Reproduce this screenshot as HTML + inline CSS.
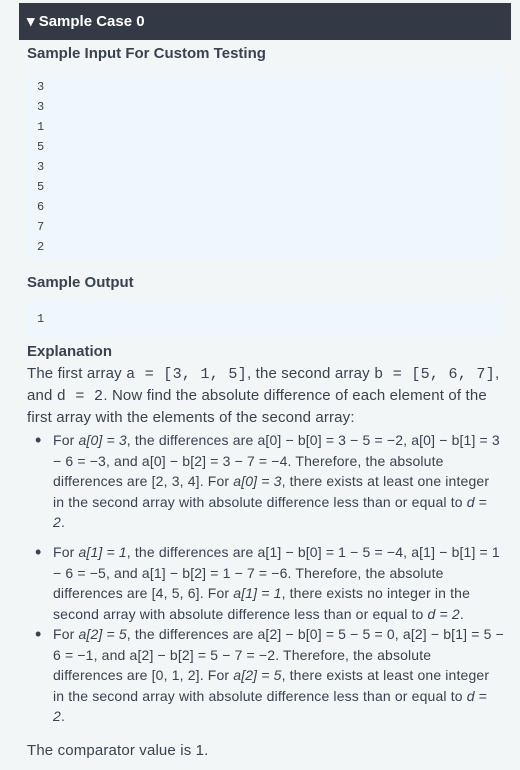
<!DOCTYPE html>
<html><head><meta charset="utf-8"><style>
body{margin:0;width:520px;height:770px;background:#f2f6f7;font-family:"Liberation Sans",sans-serif;color:#39424e;position:relative;overflow:hidden}
.hdr{position:absolute;left:19px;top:3px;width:492px;height:37px;background:#333a45;color:#fff;font-weight:bold;font-size:15px;line-height:37px;padding-left:8px;box-sizing:border-box}
.h{position:absolute;left:27px;font-weight:bold;font-size:15px;color:#39424e}
.box{position:absolute;left:27px;width:475px;background:#f0f7fc;border-radius:3px;font-family:"Liberation Mono",monospace;font-size:12px}
.box div{position:absolute;left:10px}
.p{position:absolute;left:27px;font-size:15px;line-height:21px;white-space:nowrap;letter-spacing:0.15px}
.b{position:absolute;left:53px;font-size:14px;line-height:20.5px;white-space:nowrap;letter-spacing:0.15px}
.dot{position:absolute;left:35px;font-size:18px;line-height:20px}
code{font-family:"Liberation Mono",monospace;font-size:15px;letter-spacing:0.3px}
</style></head><body>
<div class="hdr">▾ Sample Case 0</div>
<div class="h" style="top:45px">Sample Input For Custom Testing</div>
<div class="box" style="top:70px;height:190px">
<div style="top:10px">3</div><div style="top:30px">3</div><div style="top:50px">1</div><div style="top:70px">5</div><div style="top:90px">3</div><div style="top:110px">5</div><div style="top:130px">6</div><div style="top:150px">7</div><div style="top:170px">2</div>
</div>
<div class="h" style="top:274px">Sample Output</div>
<div class="box" style="top:297px;height:40px"><div style="top:15px">1</div></div>
<div class="h" style="top:343px">Explanation</div>
<div class="p" style="top:363px">The first array <code>a = [3, 1, 5]</code>, the second array <code>b = [5, 6, 7]</code>,<br>and <code>d = 2</code>. Now find the absolute difference of each element of the<br>first array with the elements of the second array:</div>
<div class="dot" style="top:430px">•</div>
<div class="b" style="top:430px">For <i>a[0] = 3</i>, the differences are a[0] − b[0] = 3 − 5 = −2, a[0] − b[1] = 3<br>− 6 = −3, and a[0] − b[2] = 3 − 7 = −4. Therefore, the absolute<br>differences are [2, 3, 4]. For <i>a[0] = 3</i>, there exists at least one integer<br>in the second array with absolute difference less than or equal to <i>d</i> =<br><i>2</i>.</div>
<div class="dot" style="top:542px">•</div>
<div class="b" style="top:542px">For <i>a[1] = 1</i>, the differences are a[1] − b[0] = 1 − 5 = −4, a[1] − b[1] = 1<br>− 6 = −5, and a[1] − b[2] = 1 − 7 = −6. Therefore, the absolute<br>differences are [4, 5, 6]. For <i>a[1] = 1</i>, there exists no integer in the<br>second array with absolute difference less than or equal to <i>d = 2</i>.</div>
<div class="dot" style="top:624px">•</div>
<div class="b" style="top:624px">For <i>a[2] = 5</i>, the differences are a[2] − b[0] = 5 − 5 = 0, a[2] − b[1] = 5 −<br>6 = −1, and a[2] − b[2] = 5 − 7 = −2. Therefore, the absolute<br>differences are [0, 1, 2]. For <i>a[2] = 5</i>, there exists at least one integer<br>in the second array with absolute difference less than or equal to <i>d</i> =<br><i>2</i>.</div>
<div class="p" style="top:740px">The comparator value is 1.</div>
</body></html>
